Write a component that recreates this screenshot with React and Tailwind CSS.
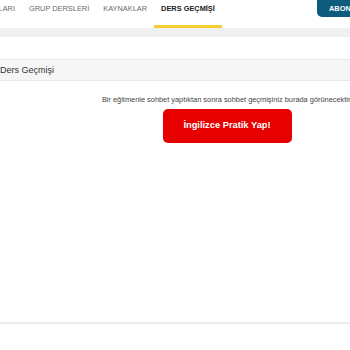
import React from 'react';

const navItems = [
  { label: 'KURSLARI', active: false },
  { label: 'GRUP DERSLERİ', active: false },
  { label: 'KAYNAKLAR', active: false },
  { label: 'DERS GEÇMİŞİ', active: true },
];

export default function App() {
  return (
    <div className="w-[350px] h-[350px] overflow-hidden bg-white font-['Liberation_Sans',Arial,sans-serif]">
      {/* Top nav */}
      <div className="relative h-[28px] bg-white">
        <div className="flex h-full items-stretch ml-[-29px]">
          {navItems.map((item) => (
            <div
              key={item.label}
              className={`flex items-center px-[7px] pb-[11px] pt-[3px] text-[7.4px] whitespace-nowrap border-b-[3px] ${
                item.active ? 'font-bold text-[#222] border-[#f3cf2e]' : 'text-[#6b6b6b] border-transparent'
              }`}
            >
              {item.label}
            </div>
          ))}
        </div>
        <div className="absolute left-[317px] top-[-6px] h-[23px] w-[60px] rounded-[5px] bg-[#0d5c7e] pl-[12px] pt-[9px] text-[7.4px] font-bold text-white">
          ABONE OL
        </div>
      </div>
      <div className="h-[9px] bg-[#f0f0f0]" />

      {/* Section header */}
      <div className="mt-[22px] h-[22px] border-y border-[#e8e8e8] bg-[#f6f6f6] flex items-center">
        <span className="text-[9px] text-[#333] pt-[2px]">Ders Geçmişi</span>
      </div>

      {/* Empty state */}
      <div className="w-[454px] flex flex-col items-center pt-[14px]">
        <p className="text-[7.4px] text-[#444] whitespace-nowrap leading-[10px]">
          Bir eğitmenle sohbet yaptıktan sonra sohbet geçmişiniz burada görünecektir.
        </p>
        <button className="mt-[4px] h-[34px] w-[129px] rounded-[5px] bg-[#e60000] text-[9.3px] font-bold text-white">
          İngilizce Pratik Yap!
        </button>
      </div>

      <div className="mt-[179px] h-[2px] bg-[#ececec]" />
    </div>
  );
}
